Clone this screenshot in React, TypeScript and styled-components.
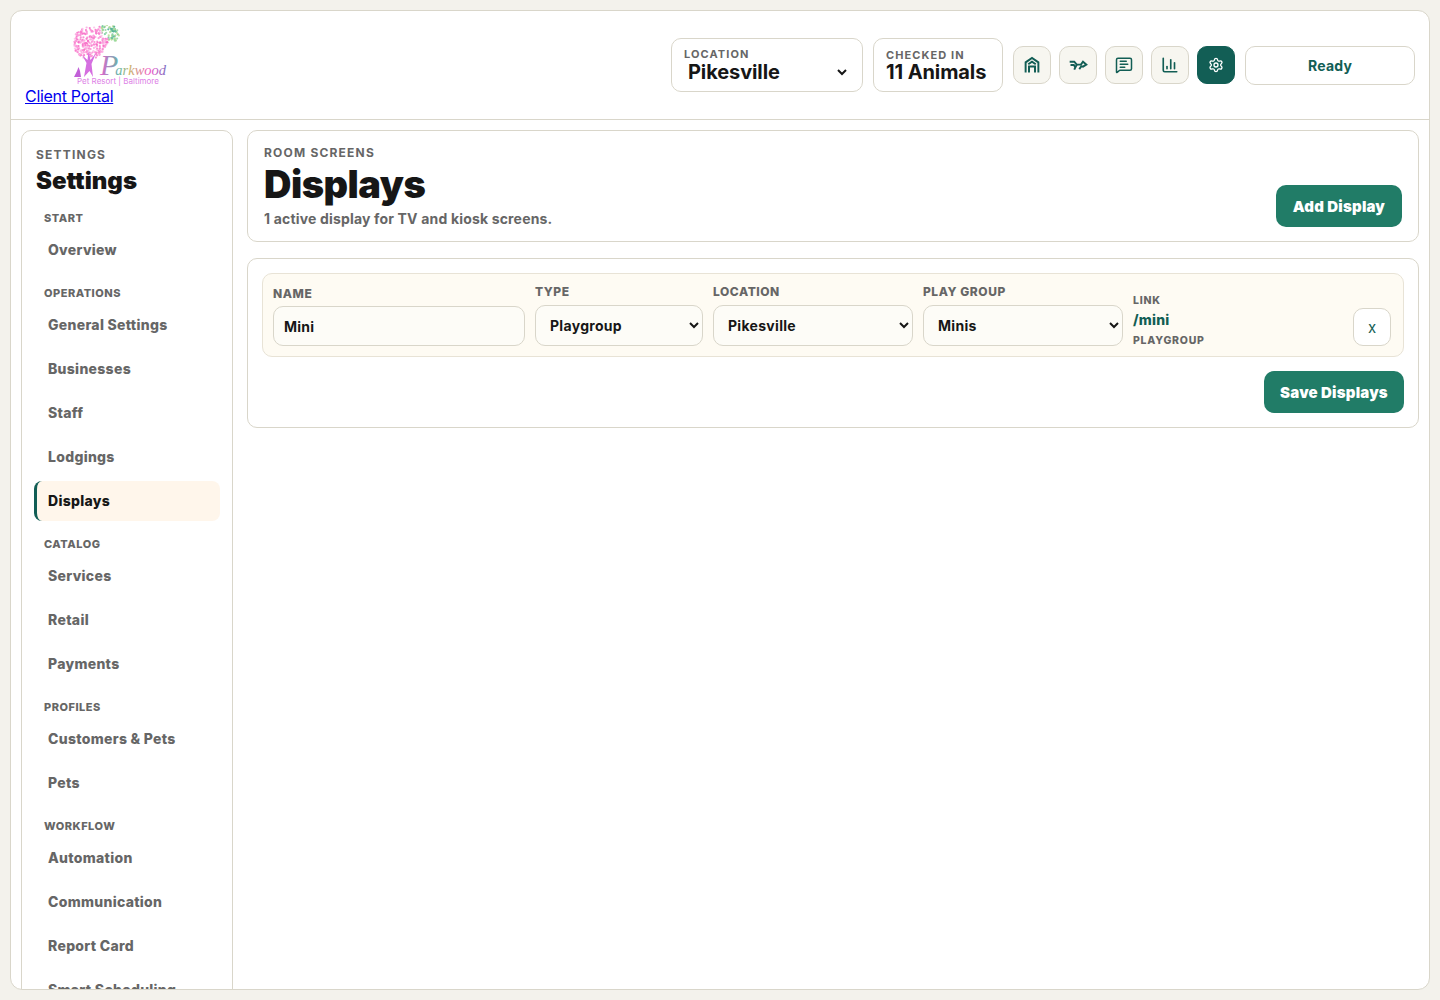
import React from 'react';
import styled, { createGlobalStyle } from 'styled-components';
import { ChartColumn, MessageSquareText, Settings as SettingsIcon } from 'lucide-react';

const GlobalStyle = createGlobalStyle`
  html, body { margin: 0; height: 100%; background: #f3f2ec; }
  body { font-family: Inter, "Liberation Sans", sans-serif; color: #161616; overflow: hidden; }
  * { box-sizing: border-box; }
`;

const Frame = styled.div`
  margin: 10px;
  height: 980px;
  background: #fff;
  border: 1px solid #d9d6ca;
  border-radius: 12px;
  overflow: hidden;
`;

const Header = styled.header`
  height: 109px;
  border-bottom: 1px solid #d9d6ca;
  display: flex;
  justify-content: space-between;
  padding: 0 14px;
`;

const Brand = styled.div`
  width: 140px;
  padding-top: 14px;
`;

const PortalLink = styled.a`
  display: block;
  font-size: 16px;
  line-height: 19px;
  letter-spacing: -0.3px;
  color: #0000ee;
  text-decoration: underline;
`;

const HeaderTools = styled.div`
  display: flex;
  align-items: center;
  gap: 10px;
`;

const Pill = styled.div<{ $width: number }>`
  width: ${p => p.$width}px;
  height: 54px;
  border: 1px solid #d9d6ca;
  border-radius: 10px;
  padding: 9px 12px 0;
  position: relative;
`;

const PillLabel = styled.div<{ $drop?: number }>`
  height: 13px;
  padding-top: ${p => p.$drop ?? 0}px;
  font-size: 11px;
  line-height: 13px;
  font-weight: 700;
  letter-spacing: 1.1px;
  color: #666;
`;

const PillValue = styled.div<{ $indent?: number }>`
  font-size: 20px;
  line-height: 24px;
  font-weight: 700;
  color: #161616;
  margin-top: -1px;
  padding-left: ${p => p.$indent ?? 0}px;
  letter-spacing: -0.1px;
`;

const Caret = styled.svg`
  position: absolute;
  right: 14px;
  top: 27px;
  width: 12px;
  height: 12px;
`;

const IconGroup = styled.div`
  display: flex;
  gap: 8px;
`;

const IconButton = styled.button<{ $active?: boolean }>`
  width: 38px;
  height: 38px;
  padding: 0;
  display: flex;
  align-items: center;
  justify-content: center;
  border-radius: 10px;
  border: 1px solid ${p => (p.$active ? '#125e55' : '#d9d6ca')};
  background: ${p => (p.$active ? '#125e55' : '#f7f6f0')};
  color: ${p => (p.$active ? '#fff' : '#125e55')};
`;

const StatusBox = styled.div`
  width: 170px;
  height: 39px;
  border: 1px solid #d9d6ca;
  border-radius: 10px;
  display: flex;
  align-items: center;
  justify-content: center;
  font-size: 14px;
  font-weight: 700;
  letter-spacing: 0.2px;
  color: #125e55;
`;

const Body = styled.div`
  display: flex;
  gap: 14px;
  padding: 10px 10px 0;
  align-items: flex-start;
`;

const Sidebar = styled.aside`
  width: 212px;
  flex: none;
  height: 900px;
  border: 1px solid #d9d6ca;
  border-radius: 10px;
  padding: 17px 12px 0;
`;

const SideEyebrow = styled.div`
  font-size: 12px;
  line-height: 14px;
  font-weight: 700;
  letter-spacing: 1.2px;
  color: #666;
  padding-left: 2px;
`;

const SideTitle = styled.div`
  font-size: 24px;
  line-height: 30px;
  font-weight: 900;
  color: #161616;
  padding-left: 2px;
  margin-top: 4px;
`;

const NavGroup = styled.div`
  margin-top: 15px;
  & + & { margin-top: 16px; }
`;

const GroupLabel = styled.div`
  font-size: 11px;
  line-height: 14px;
  font-weight: 800;
  letter-spacing: 0.5px;
  color: #666;
  padding-left: 10px;
  margin-bottom: 5px;
`;

const NavItem = styled.div<{ $active?: boolean }>`
  height: 40px;
  margin-bottom: 4px;
  display: flex;
  align-items: center;
  padding: 0 0 2px 11px;
  font-size: 14px;
  font-weight: 800;
  letter-spacing: 0.3px;
  border-radius: 8px;
  color: ${p => (p.$active ? '#161616' : '#666')};
  background: ${p => (p.$active ? '#fff6eb' : 'transparent')};
  border-left: 3px solid ${p => (p.$active ? '#125e55' : 'transparent')};
`;

const Main = styled.main`
  flex: 1;
  display: flex;
  flex-direction: column;
  gap: 16px;
`;

const Card = styled.section`
  border: 1px solid #d9d6ca;
  border-radius: 10px;
`;

const TitleCard = styled(Card)`
  height: 112px;
  padding: 15px 16px 0;
  display: flex;
  justify-content: space-between;
`;

const Eyebrow = styled.div`
  font-size: 12px;
  line-height: 14px;
  font-weight: 700;
  letter-spacing: 1.2px;
  color: #666;
`;

const PageTitle = styled.h1`
  margin: 1px 0 0;
  font-size: 38px;
  line-height: 46px;
  font-weight: 900;
  letter-spacing: -0.5px;
  color: #161616;
`;

const Subtitle = styled.div`
  margin-top: 3px;
  font-size: 14px;
  line-height: 18px;
  font-weight: 700;
  letter-spacing: 0.17px;
  color: #666;
`;

const PrimaryButton = styled.button<{ $width: number }>`
  width: ${p => p.$width}px;
  height: 42px;
  padding: 0;
  border: none;
  border-radius: 10px;
  background: #217c67;
  color: #fff;
  font-family: inherit;
  font-size: 15px;
  font-weight: 900;
  letter-spacing: 0.2px;
`;

const TitleAction = styled.div`
  align-self: flex-end;
  margin-bottom: 14px;
`;

const EditorCard = styled(Card)`
  height: 170px;
  padding: 14px;
`;

const DisplayRow = styled.div`
  height: 84px;
  background: #fefbf3;
  border: 1px solid #e8e3d6;
  border-radius: 10px;
  padding: 0 12px 0 10px;
  display: flex;
  gap: 10px;
  align-items: flex-end;
`;

const Field = styled.label<{ $width: number }>`
  width: ${p => p.$width}px;
  flex: none;
  display: flex;
  flex-direction: column;
  margin-bottom: 10px;
`;

const FieldLabel = styled.span<{ $gap: number }>`
  font-size: 12px;
  line-height: 14px;
  font-weight: 800;
  letter-spacing: 0.55px;
  color: #666;
  margin-bottom: ${p => p.$gap}px;
`;

const TextInput = styled.input`
  height: 40px;
  border: 1px solid #d9d6ca;
  border-radius: 10px;
  background: #fdfcf7;
  padding: 0 10px;
  font-family: inherit;
  font-size: 14px;
  font-weight: 700;
  letter-spacing: 0.2px;
  color: #161616;
  outline: none;
`;

const Select = styled.select`
  height: 41px;
  border: 1px solid #d9d6ca;
  border-radius: 10px;
  background: #fdfcf7;
  padding: 0 10px;
  font-family: inherit;
  font-size: 14px;
  font-weight: 700;
  letter-spacing: 0.3px;
  color: #161616;
  outline: none;
`;

const LinkBlock = styled.div`
  flex: 1;
  align-self: center;
  display: flex;
  flex-direction: column;
  margin-top: 11px;
`;

const LinkCaption = styled.span`
  font-size: 10.5px;
  line-height: 14px;
  font-weight: 800;
  letter-spacing: 0.75px;
  color: #666;
`;

const LinkValue = styled.a`
  margin: 3px 0 5px;
  font-size: 14px;
  line-height: 18px;
  font-weight: 800;
  letter-spacing: 0.2px;
  color: #125e55;
`;

const RemoveButton = styled.button`
  width: 38px;
  height: 38px;
  margin-bottom: 10px;
  flex: none;
  border: 1px solid #d9d6ca;
  border-radius: 10px;
  background: #fff;
  color: #125e55;
  font-family: inherit;
  font-size: 15px;
  padding: 1px 0 0;
`;

const SaveRow = styled.div`
  display: flex;
  justify-content: flex-end;
  margin-top: 14px;
`;

// scatter of blossoms for the logo tree, same every render
const blossoms = (() => {
  const dots: { x: number; y: number; c: string }[] = [];
  let seed = 7;
  const next = () => {
    seed = (seed * 16807) % 2147483647;
    return seed / 2147483647;
  };
  const pinks = ['#fb8fd6', '#f97fce', '#fca6df', '#f76cc6', '#fdbde8'];
  const greens = ['#6fc79a', '#8fd79c', '#4fae94', '#b7dc94'];
  while (dots.length < 300) {
    const x = next() * 47;
    const y = next() * 34;
    const inMain = ((x - 17) / 17) ** 2 + ((y - 18) / 16) ** 2 < 1;
    const inTop = ((x - 34) / 13) ** 2 + ((y - 9) / 9) ** 2 < 1;
    if (!inMain && !inTop) continue;
    if (next() < 0.18) continue;
    const green = x > 28 && y < 16 && x - 28 + (16 - y) > 9;
    const pool = green ? greens : pinks;
    dots.push({ x, y, c: pool[Math.floor(next() * pool.length)] });
  }
  return dots;
})();

const Logo = () => (
  <svg width="96" height="62" viewBox="0 0 96 62" style={{ display: 'block', marginLeft: 48 }}>
    <defs>
      <linearGradient id="parkwoodText" x1="0" x2="1" y1="0" y2="0">
        <stop offset="0" stopColor="#e85fd0" />
        <stop offset="0.3" stopColor="#62b8a8" />
        <stop offset="0.45" stopColor="#c8b36a" />
        <stop offset="0.75" stopColor="#f05ac8" />
        <stop offset="1" stopColor="#7a6fc0" />
      </linearGradient>
    </defs>
    {blossoms.map((d, i) => (
      <circle key={i} cx={d.x} cy={d.y} r={1.1} fill={d.c} opacity={0.85} />
    ))}
    <path d="M11 52 L13.5 38 L9 30 L14.5 35 L15.5 26 L17.5 35 L23 28 L18.5 39 L20 52 L16.5 46 Z" fill="#d56fe0" />
    <path d="M1 52 L4 46 L5.5 42 L7 46 L8 52 Z" fill="#c25fd8" />
    <text x="27" y="50" fontFamily="'Liberation Serif', serif" fontStyle="italic" fill="url(#parkwoodText)">
      <tspan fontSize="30">P</tspan>
      <tspan fontSize="14.5" dx="-3">arkwood</tspan>
    </text>
    <text x="4" y="58.5" fontFamily="Inter, sans-serif" fontSize="8" fill="#dd7fe6">
      Pet Resort | Baltimore
    </text>
  </svg>
);

const BarnIcon = () => (
  <svg width="18" height="18" viewBox="0 0 24 24" fill="none" stroke="currentColor" strokeWidth="2.6">
    <path d="M3.5 22V8.5L12 2.5l8.5 6V22" />
    <path d="M7 11l5-3.5 5 3.5" />
    <path d="M8 22v-8h8v8" />
  </svg>
);

const DogIcon = () => (
  <svg width="20" height="20" viewBox="0 0 24 24" fill="none" stroke="currentColor" strokeWidth="2.3">
    <path d="M2 8h5.5l3 3.5h5L18 8l4 3.5-4 2.5-2-.5-2.5 3.5" />
    <path d="M3 12h4l2 3" />
    <path d="M7.5 17.5l3-6" />
  </svg>
);

const navGroups = [
  { label: 'START', items: ['Overview'] },
  { label: 'OPERATIONS', items: ['General Settings', 'Businesses', 'Staff', 'Lodgings', 'Displays'] },
  { label: 'CATALOG', items: ['Services', 'Retail', 'Payments'] },
  { label: 'PROFILES', items: ['Customers & Pets', 'Pets'] },
  { label: 'WORKFLOW', items: ['Automation', 'Communication', 'Report Card', 'Smart Scheduling'] },
];

export default function App() {
  return (
    <>
      <GlobalStyle />
      <Frame>
        <Header>
          <Brand>
            <Logo />
            <PortalLink href="#">Client Portal</PortalLink>
          </Brand>
          <HeaderTools>
            <Pill $width={192}>
              <PillLabel>LOCATION</PillLabel>
              <PillValue $indent={4}>Pikesville</PillValue>
              <Caret viewBox="0 0 12 12" fill="none" stroke="#161616" strokeWidth="2">
                <path d="M2 4l4 4 4-4" />
              </Caret>
            </Pill>
            <Pill $width={130}>
              <PillLabel $drop={1}>CHECKED IN</PillLabel>
              <PillValue>11 Animals</PillValue>
            </Pill>
            <IconGroup>
              <IconButton><BarnIcon /></IconButton>
              <IconButton><DogIcon /></IconButton>
              <IconButton><MessageSquareText size={18} strokeWidth={2} /></IconButton>
              <IconButton><ChartColumn size={18} strokeWidth={2.2} /></IconButton>
              <IconButton $active><SettingsIcon size={16} strokeWidth={2} /></IconButton>
            </IconGroup>
            <StatusBox>Ready</StatusBox>
          </HeaderTools>
        </Header>
        <Body>
          <Sidebar>
            <SideEyebrow>SETTINGS</SideEyebrow>
            <SideTitle>Settings</SideTitle>
            {navGroups.map(group => (
              <NavGroup key={group.label}>
                <GroupLabel>{group.label}</GroupLabel>
                {group.items.map(item => (
                  <NavItem key={item} $active={item === 'Displays'}>{item}</NavItem>
                ))}
              </NavGroup>
            ))}
          </Sidebar>
          <Main>
            <TitleCard>
              <div>
                <Eyebrow>ROOM SCREENS</Eyebrow>
                <PageTitle>Displays</PageTitle>
                <Subtitle>1 active display for TV and kiosk screens.</Subtitle>
              </div>
              <TitleAction>
                <PrimaryButton $width={126}>Add Display</PrimaryButton>
              </TitleAction>
            </TitleCard>
            <EditorCard>
              <DisplayRow>
                <Field $width={252}>
                  <FieldLabel $gap={5}>NAME</FieldLabel>
                  <TextInput defaultValue="Mini" />
                </Field>
                <Field $width={168}>
                  <FieldLabel $gap={6}>TYPE</FieldLabel>
                  <Select defaultValue="Playgroup"><option>Playgroup</option></Select>
                </Field>
                <Field $width={200}>
                  <FieldLabel $gap={6}>LOCATION</FieldLabel>
                  <Select defaultValue="Pikesville"><option>Pikesville</option></Select>
                </Field>
                <Field $width={200}>
                  <FieldLabel $gap={6}>PLAY GROUP</FieldLabel>
                  <Select defaultValue="Minis"><option>Minis</option></Select>
                </Field>
                <LinkBlock>
                  <LinkCaption>LINK</LinkCaption>
                  <LinkValue>/mini</LinkValue>
                  <LinkCaption>PLAYGROUP</LinkCaption>
                </LinkBlock>
                <RemoveButton>x</RemoveButton>
              </DisplayRow>
              <SaveRow>
                <PrimaryButton $width={140}>Save Displays</PrimaryButton>
              </SaveRow>
            </EditorCard>
          </Main>
        </Body>
      </Frame>
    </>
  );
}
